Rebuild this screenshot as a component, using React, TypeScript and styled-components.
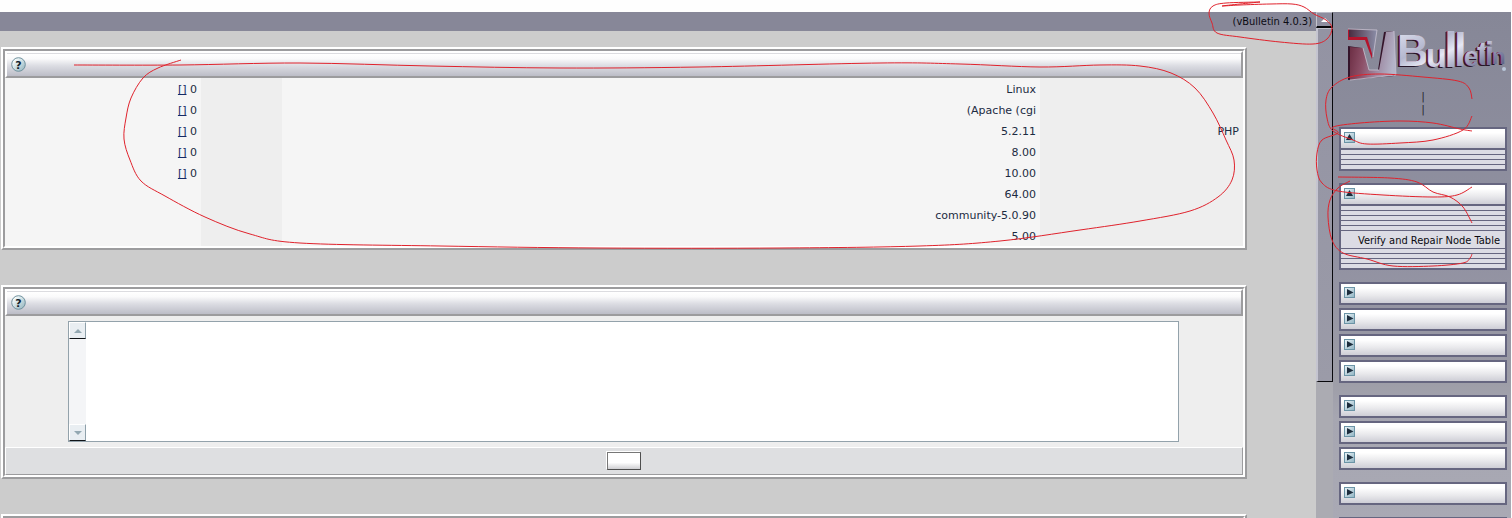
import React from "react";
import styled, { createGlobalStyle } from "styled-components";

const Global = createGlobalStyle`
  *, *::before, *::after { box-sizing: border-box; }
  body { margin: 0; background: #fff; font-family: "DejaVu Sans", Verdana, sans-serif; font-size: 11px; color: #1c2b42; }
`;

const Page = styled.div`
  position: relative;
  display: flex;
  height: 100vh;
  padding: 12px 1px 0 0;
  overflow: hidden;
  background: #fefefe;
`;

const Main = styled.main`
  flex: 1;
  min-width: 0;
  background: #ccc;
`;

const TopBar = styled.header`
  height: 19px;
  padding-right: 4px;
  background: #878798;
  color: #0c0c14;
  font-family: "DejaVu Sans Condensed", Tahoma, sans-serif;
  line-height: 19px;
  text-align: right;
`;

const Panels = styled.div`
  display: flex;
  flex-direction: column;
  gap: 35px;
  padding: 16px 69px 0 1px;
`;

const Panel = styled.section`
  border: 2px solid;
  border-color: #fff #9c9c9e #9c9c9e #fff;
`;

const PanelInner = styled.div`
  border: 2px solid;
  border-color: #9c9c9e #fff #fff #9c9c9e;
  background: #eee;
`;

const PanelHead = styled.div`
  display: flex;
  align-items: center;
  height: 27px;
  padding-left: 4px;
  border: 2px solid;
  border-color: #fff #9c9c9e #9c9c9e #fff;
  background: linear-gradient(#dcdce0 0 1px, #fff 1px, #fafafb 25%, #dcdde3 55%, #bcbdc7);
`;

const HelpLink = styled.a`
  display: block;
  height: 15px;
  margin-bottom: 1px;
`;

const StatTable = styled.table`
  width: 100%;
  border-collapse: collapse;
  table-layout: fixed;
`;

const Cell = styled.td<{ $shade?: boolean }>`
  height: 21px;
  padding: 2px 4px 0;
  background: ${(p) => (p.$shade ? "#eee" : "#f5f5f5")};
  line-height: 19px;
  text-align: right;
  white-space: nowrap;
`;

const CountLink = styled.a`
  color: #142a66;
`;

const NotesBody = styled.div`
  padding: 5px 64px 5px 63px;
`;

const NotesBox = styled.div`
  display: flex;
  height: 121px;
  border: 1px solid #93a2ab;
  background: #fff;
`;

const NotesScroll = styled.div`
  display: flex;
  flex-direction: column;
  justify-content: space-between;
  width: 17px;
  background: #f4f5f7;
`;

const NotesArrow = styled.button`
  display: flex;
  align-items: center;
  justify-content: center;
  width: 17px;
  height: 17px;
  padding: 0;
  border: 1px solid;
  border-color: #fff #8ea0aa #101418 #fff;
  background: #e9eef2;
`;

const NotesInput = styled.textarea`
  flex: 1;
  padding: 2px;
  border: 0;
  outline: 0;
  resize: none;
  background: transparent;
  font: inherit;
`;

const PanelFoot = styled.div`
  display: flex;
  justify-content: center;
  height: 28px;
  padding-top: 4px;
  border: 1px solid;
  border-color: #fff #9c9c9e #9c9c9e #fff;
  background: #dedfe1;
`;

const SaveButton = styled.button`
  width: 34px;
  height: 18px;
  padding: 0;
  border: 1px solid;
  border-color: #777 #4e4e4e #4e4e4e #777;
  background: linear-gradient(#fff 60%, #cfcfd2);
  box-shadow: -1px -1px 0 #fff;
`;

const Scrollbar = styled.div`
  width: 17px;
  background: #ababb2;
`;

const ScrollUp = styled.button`
  display: flex;
  align-items: center;
  justify-content: center;
  width: 17px;
  height: 16px;
  padding: 0;
  border: solid;
  border-width: 1px 1px 2px 1px;
  border-color: #b8b8c4 #08080c #08080c #c4c4ce;
  background: #8e8e9f;
`;

const ScrollThumb = styled.div`
  height: 70%;
  border: solid;
  border-width: 1px 1px 1px 2px;
  border-color: #c0c0ca #08080c #08080c #c4c4d0;
  background: linear-gradient(#9393a3, #9b9ba8);
`;

const Sidebar = styled.aside`
  width: 178px;
  padding: 0 4px 0 6px;
  background: linear-gradient(#868797, #9292a2 50%, #9c9ca6 72%, #a6a6b1 80%, #a9a9b4);
`;

const Logo = styled.svg`
  display: block;
  width: 168px;
  height: 78px;
`;

const LogoText = styled.text`
  font-family: "Liberation Sans", Arial, sans-serif;
  font-weight: 700;
  text-shadow: -1px 0 0 #8e1c39, -2px 1px 0 #261629;
`;

const QuickLinks = styled.div`
  height: 37px;
  color: #2c2c34;
  line-height: 13px;
  text-align: center;
`;

const MenuGroup = styled.div`
  display: flex;
  flex-direction: column;
  gap: 3px;
  margin-bottom: 12px;
`;

const Menu = styled.div`
  border: 2px solid #666680;
  background: #666680;
`;

const MenuHead = styled.button`
  display: flex;
  align-items: flex-start;
  width: 100%;
  height: 19px;
  padding: 3px;
  border: 0;
  background: linear-gradient(#fff 20%, #e9e9ec 60%, #ceced6);
`;

const MenuList = styled.ul`
  display: flex;
  flex-direction: column;
  gap: 1px;
  margin: 2px 0 0;
  padding: 0;
  list-style: none;
`;

const MenuItem = styled.li<{ $filled?: boolean }>`
  height: ${(p) => (p.$filled ? "17px" : "4px")};
  padding-right: 5px;
  background: #dcdce4;
  line-height: 19px;
  text-align: right;
  white-space: nowrap;
`;

const MenuLink = styled.a`
  color: #0a0a10;
  font-family: "DejaVu Sans Condensed", Tahoma, sans-serif;
  text-decoration: none;
`;

const Marks = styled.svg`
  position: absolute;
  top: 0;
  left: 0;
  width: 1512px;
  height: 518px;
  pointer-events: none;
`;

type Point = [number, number];

/* Turns a list of pen positions into one smooth stroke. */
function strokePath(points: Point[]): string {
  let d = `M${points[0][0]} ${points[0][1]}`;
  for (let i = 0; i < points.length - 1; i++) {
    const a = points[Math.max(0, i - 1)];
    const b = points[i];
    const c = points[i + 1];
    const e = points[Math.min(points.length - 1, i + 2)];
    d += `C${b[0] + (c[0] - a[0]) / 6} ${b[1] + (c[1] - a[1]) / 6} ${c[0] - (e[0] - b[0]) / 6} ${c[1] - (e[1] - b[1]) / 6} ${c[0]} ${c[1]}`;
  }
  return d;
}

const penStrokes: Point[][] = [
  [[74, 65], [180, 65], [300, 63], [430, 66], [560, 68], [700, 67], [880, 63], [960, 64], [1040, 67], [1100, 65], [1140, 66], [1171, 73], [1195, 88], [1213, 113], [1226, 140], [1234, 160], [1232, 180], [1218, 197], [1190, 211], [1140, 221], [1080, 230], [1000, 241], [920, 246], [780, 248], [600, 248], [440, 246], [300, 243], [250, 234], [205, 217], [165, 196], [141, 181], [130, 160], [124, 139], [126, 118], [131, 98], [143, 78], [158, 68], [181, 60]],
  [[1260, 2], [1240, 4], [1222, 6], [1240, 5], [1270, 4], [1292, 4], [1304, 7], [1314, 14], [1326, 20], [1332, 28], [1327, 39], [1313, 44], [1280, 42], [1240, 37], [1217, 33], [1212, 23], [1209, 13], [1213, 6], [1226, 3], [1260, 2]],
  [[1472, 99], [1469, 88], [1458, 81], [1423, 77], [1380, 74], [1350, 77], [1332, 87], [1326, 100], [1327, 118], [1333, 131], [1353, 140], [1367, 144], [1400, 143], [1433, 140], [1463, 130], [1472, 116]],
  [[1472, 131], [1460, 129], [1433, 123], [1400, 121], [1360, 123], [1333, 127], [1338, 133], [1322, 140], [1317, 153], [1317, 170], [1322, 183], [1338, 191], [1383, 195], [1433, 197], [1457, 195], [1472, 187]],
  [[1338, 177], [1390, 178], [1417, 182], [1433, 192], [1450, 197], [1463, 207], [1472, 223]],
  [[1350, 181], [1338, 188], [1330, 200], [1328, 217], [1332, 240], [1343, 253], [1367, 259], [1393, 266], [1433, 266], [1463, 263], [1470, 258], [1472, 254]],
];

function HelpIcon() {
  return (
    <HelpLink href="#help" aria-label="Help">
      <svg width="15" height="15" viewBox="0 0 15 15">
        <defs>
          <linearGradient id="help-fill" x1="0" y1="0" x2="1" y2="1">
            <stop offset="0.2" stopColor="#f4fafb" />
            <stop offset="1" stopColor="#8cb0ba" />
          </linearGradient>
        </defs>
        <circle cx="7.5" cy="7.5" r="6.8" fill="url(#help-fill)" stroke="#6f919d" strokeWidth="1" />
        <text x="7.5" y="11.5" textAnchor="middle" fontFamily="DejaVu Sans, sans-serif" fontWeight="700" fontSize="11" fill="#12242e">?</text>
      </svg>
    </HelpLink>
  );
}

function ToggleIcon({ open }: { open?: boolean }) {
  return (
    <svg width="11" height="11" viewBox="0 0 11 11">
      <defs>
        <linearGradient id="toggle-fill" x1="0" y1="0" x2="1" y2="1">
          <stop offset="0" stopColor="#eef6fa" />
          <stop offset="1" stopColor="#8fb3c2" />
        </linearGradient>
      </defs>
      <rect x="0.5" y="0.5" width="10" height="10" fill="url(#toggle-fill)" stroke="#6b94a6" />
      <path d={open ? "M5.5 2 L9 8 H2 Z" : "M3 2 L9.5 5.5 L3 8.5 Z"} fill="#1c2c3c" />
    </svg>
  );
}

function Arrow({ down, color }: { down?: boolean; color: string }) {
  return (
    <svg width="8" height="4" viewBox="0 0 8 4">
      <path d={down ? "M0 0 H8 L4 4 Z" : "M4 0 L8 4 H0 Z"} fill={color} />
    </svg>
  );
}

const letters = [
  { ch: "B", x: 58, y: 54, size: 44 },
  { ch: "u", x: 87, y: 55, size: 34 },
  { ch: "l", x: 105, y: 55, size: 50 },
  { ch: "l", x: 115, y: 54, size: 46 },
  { ch: "e", x: 125, y: 54, size: 27 },
  { ch: "t", x: 138, y: 53, size: 34 },
  { ch: "i", x: 146, y: 53, size: 33 },
  { ch: "n", x: 153, y: 52, size: 22 },
];

function VBulletinLogo() {
  return (
    <Logo viewBox="0 0 168 78" role="img" aria-label="vBulletin">
      <defs>
        <linearGradient id="steel" x1="0" y1="0" x2="1" y2="1">
          <stop offset="0" stopColor="#e9ebf7" />
          <stop offset="0.35" stopColor="#b4b7ce" />
          <stop offset="0.5" stopColor="#e6e8f4" />
          <stop offset="0.75" stopColor="#7f84a4" />
          <stop offset="1" stopColor="#3a4068" />
        </linearGradient>
        <linearGradient id="mark" x1="0" y1="0.2" x2="1" y2="0.4">
          <stop offset="0" stopColor="#6a2c42" />
          <stop offset="0.35" stopColor="#8d5068" />
          <stop offset="0.7" stopColor="#a08ea6" />
          <stop offset="1" stopColor="#b4b4c8" />
        </linearGradient>
        <linearGradient id="mark-top" x1="0" y1="0" x2="1" y2="0">
          <stop offset="0" stopColor="#4a2c40" />
          <stop offset="1" stopColor="#8b8ea8" />
        </linearGradient>
      </defs>
      <path d="M9 17 L36 19 L33 47 L26 28 L9 28 Z" fill="#b4142c" />
      <path d="M10 17 L38 18 L34 45 L28 25 L10 25 Z" fill="url(#mark-top)" />
      <path d="M9 34 L23 36 L29 58 L39 58 L45 20 L54 19 L55 64 L9 68 Z" fill="#34142a" />
      <path d="M11 35 L24 36 L30 58 L40 58 L47 20 L55 19 L57 63 L11 68 Z" fill="url(#mark)" />
      <path d="M9 17 L38 18 L34 45 M24 36 L30 58 L40 58 M11 68 L57 63 L55 19" fill="none" stroke="#c8c2d0" strokeWidth="0.8" />
      <LogoText fill="url(#steel)">
        {letters.map((l, i) => (
          <tspan key={i} x={l.x} y={l.y} fontSize={l.size}>{l.ch}</tspan>
        ))}
      </LogoText>
      <circle cx="165" cy="57" r="2" fill="#b8c6d8" />
    </Logo>
  );
}

const stats = [
  { label: "", value: "Linux", count: true },
  { label: "", value: "(Apache (cgi", count: true },
  { label: "PHP", value: "5.2.11", count: true },
  { label: "", value: "8.00", count: true },
  { label: "", value: "10.00", count: true },
  { label: "", value: "64.00", count: false },
  { label: "", value: "community-5.0.90", count: false },
  { label: "", value: "5.00", count: false },
];

const menuGroups: { items?: string[] }[][] = [
  [{ items: ["", "", "", ""] }],
  [{ items: ["", "", "", "", "", "Verify and Repair Node Table", "", "", "", ""] }],
  [{}, {}, {}, {}],
  [{}, {}, {}],
  [{}],
  [{}],
];

export default function App() {
  return (
    <Page>
      <Global />
      <Main>
        <TopBar>(vBulletin 4.0.3)</TopBar>
        <Panels>
          <Panel>
            <PanelInner>
              <PanelHead><HelpIcon /></PanelHead>
              <StatTable>
                <colgroup>
                  <col style={{ width: 196 }} />
                  <col style={{ width: 81 }} />
                  <col />
                  <col style={{ width: 203 }} />
                </colgroup>
                <tbody>
                  {stats.map((s) => (
                    <tr key={s.value}>
                      <Cell>{s.count && <><CountLink href="#count">[]</CountLink> 0</>}</Cell>
                      <Cell $shade />
                      <Cell>{s.value}</Cell>
                      <Cell $shade>{s.label}</Cell>
                    </tr>
                  ))}
                </tbody>
              </StatTable>
            </PanelInner>
          </Panel>
          <Panel>
            <PanelInner>
              <PanelHead><HelpIcon /></PanelHead>
              <NotesBody>
                <NotesBox>
                  <NotesScroll>
                    <NotesArrow type="button" aria-label="Scroll notes up"><Arrow color="#93a8b2" /></NotesArrow>
                    <NotesArrow type="button" aria-label="Scroll notes down"><Arrow down color="#93a8b2" /></NotesArrow>
                  </NotesScroll>
                  <NotesInput aria-label="Notes" />
                </NotesBox>
              </NotesBody>
              <PanelFoot><SaveButton type="submit" aria-label="Save" /></PanelFoot>
            </PanelInner>
          </Panel>
          <Panel>
            <PanelInner>
              <PanelHead />
            </PanelInner>
          </Panel>
        </Panels>
      </Main>
      <Scrollbar>
        <ScrollUp type="button" aria-label="Scroll up"><Arrow color="#fff" /></ScrollUp>
        <ScrollThumb />
      </Scrollbar>
      <Sidebar>
        <VBulletinLogo />
        <QuickLinks>
          <div>|</div>
          <div>|</div>
        </QuickLinks>
        {menuGroups.map((group, g) => (
          <MenuGroup key={g}>
            {group.map((menu, m) => (
              <Menu key={m}>
                <MenuHead type="button" aria-label="Toggle menu" aria-expanded={!!menu.items}>
                  <ToggleIcon open={!!menu.items} />
                </MenuHead>
                {menu.items && (
                  <MenuList>
                    {menu.items.map((text, i) => (
                      <MenuItem key={i} $filled={!!text}>
                        {text && <MenuLink href="#verify">{text}</MenuLink>}
                      </MenuItem>
                    ))}
                  </MenuList>
                )}
              </Menu>
            ))}
          </MenuGroup>
        ))}
      </Sidebar>
      <Marks viewBox="0 0 1512 518" aria-hidden="true">
        {penStrokes.map((points, i) => (
          <path key={i} d={strokePath(points)} fill="none" stroke="#e0222c" strokeWidth="1" />
        ))}
      </Marks>
    </Page>
  );
}
